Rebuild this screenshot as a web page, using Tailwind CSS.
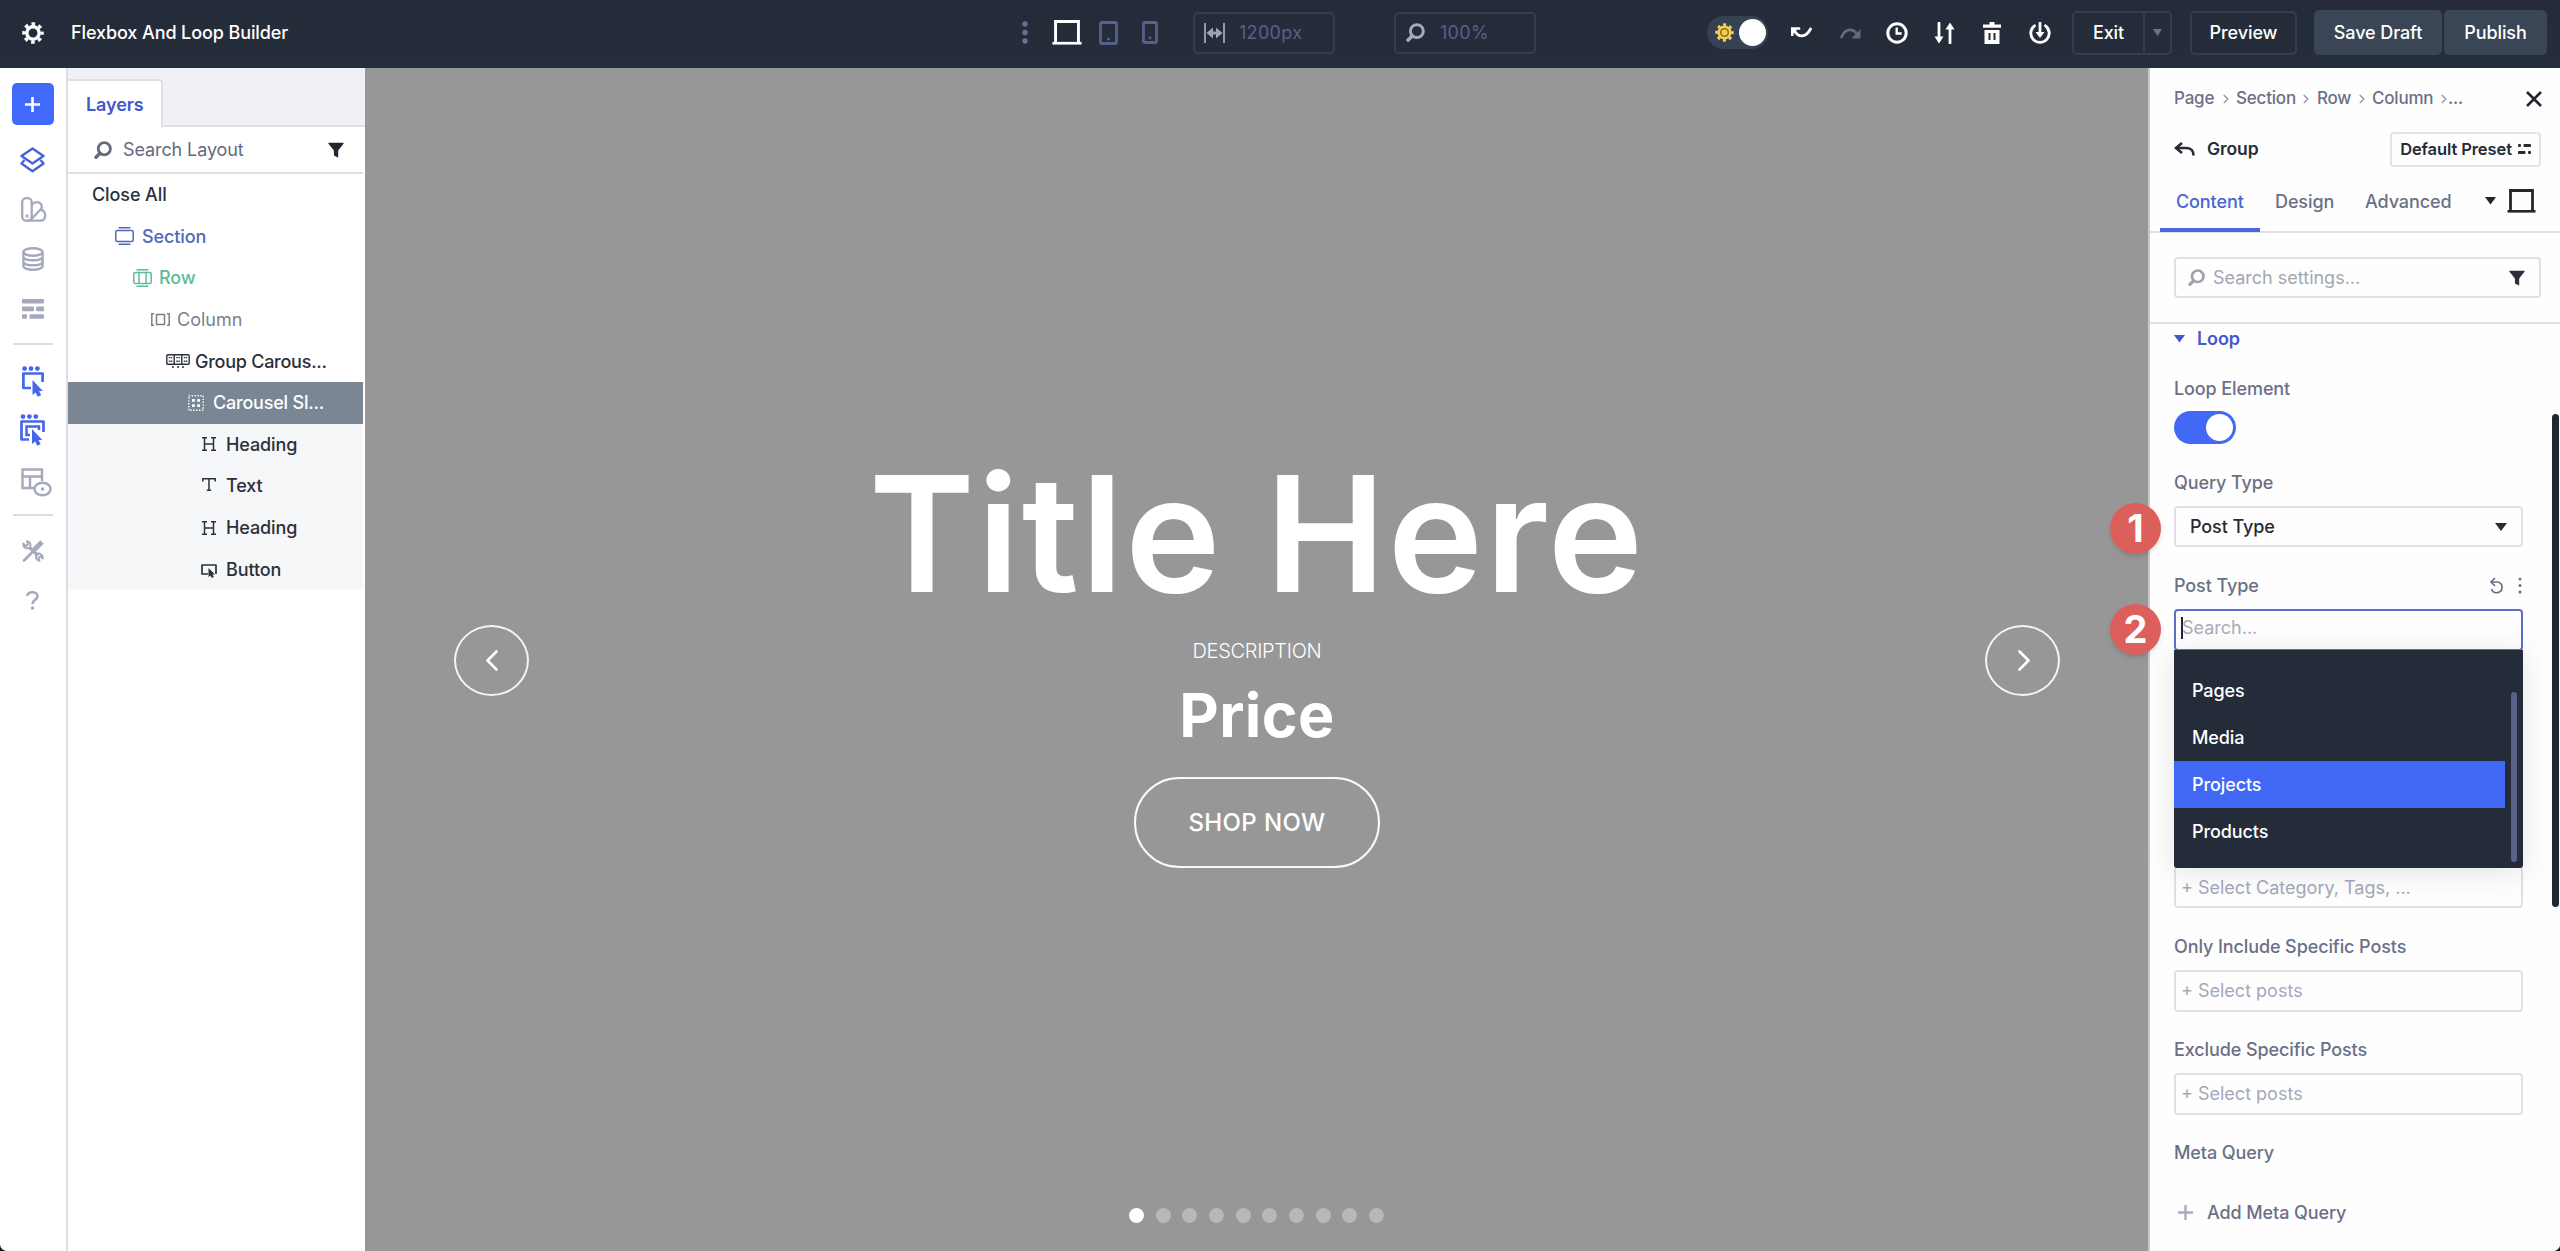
<!doctype html>
<html lang="en">
  <head>
    <meta charset="UTF-8" />
    <meta name="viewport" content="width=device-width, initial-scale=1.0" />
    <title>Flexbox And Loop Builder</title>
    <script src="https://cdn.jsdelivr.net/npm/@tailwindcss/browser@4"></script>
  </head>
  <body class="bg-[#111820] font-['Inter',sans-serif]">
    <svg class="hidden">
      <symbol id="i-search" viewBox="0 0 18 18">
        <circle cx="10.3" cy="7.7" r="6.1" fill="none" stroke="currentColor" stroke-width="2.8" />
        <path d="M6 12.2 2 16.2" stroke="currentColor" stroke-width="3.4" stroke-linecap="round" />
      </symbol>
      <symbol id="i-funnel" viewBox="0 0 16 16">
        <path d="M1 .7h14c.6 0 .8.6.5 1L10.2 8.5v6.3c0 .5-.4.7-.8.5l-3-1.6a.8.8 0 0 1-.5-.7V8.5L.5 1.7C.2 1.3.4.7 1 .7z" fill="currentColor" />
      </symbol>
      <symbol id="i-laptop" viewBox="0 0 28 24">
        <path d="M3 22V1.500h22V22" fill="none" stroke="currentColor" stroke-width="2.800" />
        <path d="M0 22.300h28" stroke="currentColor" stroke-width="2.600" />
      </symbol>
      <symbol id="i-heading" viewBox="0 0 16 14">
        <path d="M3.500 1v12M12.500 1v12M3.500 7h9M1 .8h5M10 .8h5M1 13.200h5M10 13.200h5" fill="none" stroke="currentColor" stroke-width="1.500" />
      </symbol>
      <symbol id="i-chevron" viewBox="0 0 6 10">
        <path d="m.8 1 4 4-4 4" fill="none" stroke="currentColor" stroke-width="1.600" />
      </symbol>
    </svg>

    <div class="flex h-[1251px] w-[2560px] flex-col overflow-hidden rounded-b-[7px] bg-white">
      <!-- top bar -->
      <header class="flex h-[68px] shrink-0 items-center bg-linear-to-b from-[#242a39] to-[#252e3a] pb-[3px] text-[18px] font-medium tracking-[-0.1px] text-white">
        <svg class="ml-[22px] size-[22px]" viewBox="0 0 22 22">
          <circle cx="11" cy="11" r="6.200" fill="none" stroke="currentColor" stroke-width="3.400" />
          <circle cx="11" cy="11" r="9.200" fill="none" stroke="currentColor" stroke-width="3.200" stroke-dasharray="3.613 3.613" stroke-dashoffset="1.800" />
        </svg>
        <div class="ml-[27px] w-[944px] whitespace-nowrap">Flexbox And Loop Builder</div>

        <div class="flex w-[692px] items-center text-[#59608a]">
          <svg class="ml-[7px] h-[24px] w-[6px] text-[#6a7090]" viewBox="0 0 6 24" fill="currentColor">
            <circle cx="3" cy="3" r="2.700" /><circle cx="3" cy="11.500" r="2.700" /><circle cx="3" cy="20" r="2.700" />
          </svg>
          <svg class="ml-[24px] h-[25px] w-[30px] text-white"><use href="#i-laptop" /></svg>
          <svg class="ml-[17px] h-[24px] w-[19px]" viewBox="0 0 19 24">
            <rect x="1.500" y="1.500" width="16" height="21" rx="1.500" fill="none" stroke="currentColor" stroke-width="2.800" />
            <circle cx="9.500" cy="18" r="1.500" fill="currentColor" />
          </svg>
          <svg class="ml-[24px] h-[23px] w-[16px]" viewBox="0 0 16 23">
            <rect x="1.500" y="1.500" width="13" height="20" rx="1.500" fill="none" stroke="currentColor" stroke-width="2.800" />
            <circle cx="8" cy="17" r="1.400" fill="currentColor" />
          </svg>
          <div class="ml-[35px] flex h-[42px] w-[142px] items-center rounded-[5px] border-2 border-[#363d4f] font-normal">
            <svg class="ml-[9px] h-[20px] w-[21px] text-[#9ea5b9]" viewBox="0 0 21 20">
              <path d="M1 0v20M20 0v20" stroke="currentColor" stroke-width="1.800" />
              <path d="M2.500 10 9 4.500V8.500h3V4.500L18.500 10 12 15.500V11.500H9v4z" fill="currentColor" />
            </svg>
            <span class="ml-[14px] tracking-[0.3px]">1200px</span>
          </div>
          <div class="ml-[59px] flex h-[42px] w-[142px] items-center rounded-[5px] border-2 border-[#363d4f] font-normal">
            <svg class="ml-[10px] size-[19px] text-[#a5abbe]"><use href="#i-search" /></svg>
            <span class="ml-[15px] tracking-[0.3px]">100%</span>
          </div>
        </div>

        <div class="flex items-center">
          <div class="flex h-[33px] w-[61px] items-center justify-between rounded-full bg-[#364151] pr-[2px] pl-[8px]">
            <svg class="size-[19px]" viewBox="0 0 20 20">
              <circle cx="10" cy="10" r="7.500" fill="#f2cf55" />
              <circle cx="10" cy="10" r="8" fill="none" stroke="#f2cf55" stroke-width="3.500" stroke-dasharray="3.140 3.140" stroke-dashoffset="1.570" />
              <circle cx="10" cy="10" r="4" fill="none" stroke="#8b6d1c" stroke-width="1.600" />
            </svg>
            <div class="size-[27px] rounded-full bg-white"></div>
          </div>
          <svg class="ml-[23px] h-[12px] w-[21px]" viewBox="0 0 21 12">
            <path d="M4 4.500c3 5.500 10.500 7 15.500-2.500" fill="none" stroke="currentColor" stroke-width="2.800" stroke-linecap="round" />
            <path d="M1.200 9V1.500h8" fill="none" stroke="currentColor" stroke-width="2.600" />
            <path d="M0 1h7.500L0 8.500z" fill="currentColor" />
          </svg>
          <svg class="ml-[28px] h-[12px] w-[21px] text-[#636978]" viewBox="0 0 21 12">
            <path d="M1.500 10C5.500 1 13 1 17 7" fill="none" stroke="currentColor" stroke-width="2.800" stroke-linecap="round" />
            <path d="M20.500 2v9.500h-9z" fill="currentColor" />
          </svg>
          <svg class="ml-[25px] size-[22px]" viewBox="0 0 22 22" fill="none" stroke="currentColor">
            <circle cx="11" cy="11" r="9.200" stroke-width="3" />
            <path d="M10.700 5.500v6h5" stroke-width="2.400" />
          </svg>
          <svg class="ml-[26px] h-[22px] w-[21px]" viewBox="0 0 21 22">
            <path d="M5 1v15M16 6v15" stroke="currentColor" stroke-width="2.800" stroke-linecap="round" />
            <path d="M.5 14.500h9L5 21.500zM11.500 7.500h9L16 .5z" fill="currentColor" />
          </svg>
          <svg class="ml-[28px] h-[22px] w-[18px]" viewBox="0 0 18 22">
            <path d="M6.500 0h5v2.500H18v3.200H0V2.500h6.500z" fill="currentColor" />
            <path fill-rule="evenodd" d="M1.500 8h15v14h-15zM5.500 11v7h2v-7zM10.500 11v7h2v-7z" fill="currentColor" />
          </svg>
          <svg class="ml-[28px] size-[22px]" viewBox="0 0 22 22" fill="none" stroke="currentColor">
            <path d="M5.500 3.800a9.200 9.200 0 1 0 11 0" stroke-width="2.900" stroke-linecap="round" />
            <path d="M11 1v11" stroke-width="2.800" stroke-linecap="round" />
            <path d="M6.500 10h9L11 16z" fill="currentColor" stroke="none" />
          </svg>
          <div class="ml-[21px] flex h-[44px] w-[100px] rounded-[5px] border-2 border-[#363d4f]">
            <div class="flex w-[69px] items-center justify-center">Exit</div>
            <div class="flex flex-1 items-center justify-center border-l-2 border-[#363d4f]">
              <svg class="h-[7px] w-[9px]" viewBox="0 0 9 7"><path d="M0 0h9L4.500 7z" fill="#6a6f98" /></svg>
            </div>
          </div>
          <div class="ml-[18px] flex h-[44px] w-[107px] items-center justify-center rounded-[5px] border-2 border-[#363d4f]">Preview</div>
          <div class="ml-[17px] flex h-[45px] w-[128px] items-center justify-center rounded-[5px] bg-[#3a4556]">Save Draft</div>
          <div class="ml-[2px] flex h-[45px] w-[103px] items-center justify-center rounded-[5px] bg-[#3a4556]">Publish</div>
        </div>
      </header>

      <div class="flex min-h-0 flex-1">
        <!-- icon rail -->
        <nav class="flex w-[68px] shrink-0 flex-col items-center border-r-2 border-[#dcdce3] pt-[15px] pr-px text-[#a5a9bb]">
          <div class="flex size-[42px] items-center justify-center rounded-[5px] bg-[#4169fa] text-white">
            <svg class="size-[15px]" viewBox="0 0 15 15"><path d="M7.500 0v15M0 7.500h15" stroke="currentColor" stroke-width="2.600" /></svg>
          </div>
          <div class="mt-[10px] flex h-[50px] items-center text-[#4762d8]">
            <svg class="h-[26px] w-[25px]" viewBox="0 0 25 26" fill="none" stroke="currentColor" stroke-width="2.400" stroke-linejoin="round">
              <path d="M12.500 1.500 23.500 9l-11 7.500L1.500 9z" />
              <path d="M4.500 13 1.500 16.500l11 7.700 11-7.700L20.500 13" />
            </svg>
          </div>
          <div class="flex h-[49px] items-center">
            <svg class="ml-[2px] h-[25px] w-[26px]" viewBox="0 0 26 25" fill="none" stroke="currentColor" stroke-width="2.300">
              <rect x="1.200" y="1.200" width="9.500" height="22.500" rx="4" />
              <path d="M11 7.500c5-5 11-1 9.500 4L10 22.500" />
              <path d="M19.500 13c6-.5 6.500 10.700 0 10.700H6" />
              <circle cx="6" cy="19" r=".6" />
            </svg>
          </div>
          <div class="flex h-[50px] items-center">
            <svg class="h-[24px] w-[22px]" viewBox="0 0 22 24" fill="none" stroke="currentColor" stroke-width="2.400">
              <ellipse cx="11" cy="5" rx="9.600" ry="3.800" />
              <path d="M1.400 5v14c0 2 4 3.800 9.600 3.800s9.600-1.800 9.600-3.800V5M1.400 9.800c0 2 4 3.500 9.600 3.500s9.600-1.500 9.600-3.500M1.400 14.800c0 2 4 3.500 9.600 3.500s9.600-1.500 9.600-3.500" />
            </svg>
          </div>
          <div class="flex h-[50px] items-center">
            <svg class="h-[20px] w-[22px]" viewBox="0 0 22 20" fill="currentColor">
              <rect width="22" height="4.600" rx="1" />
              <rect y="7.600" width="12" height="4.600" rx="1" /><rect x="14" y="7.600" width="8" height="4.600" rx="1" />
              <rect y="15.200" width="5" height="4.600" rx="1" /><rect x="7.500" y="15.200" width="14.500" height="4.600" rx="1" />
            </svg>
          </div>
          <div class="mt-[9px] h-[2px] w-[40px] bg-[#dedee2]"></div>
          <div class="mt-[11px] flex h-[50px] items-center text-[#4567ee]">
            <svg class="h-[31px] w-[22px]" viewBox="0 0 22 31">
              <g fill="currentColor"><circle cx="2.600" cy="2.600" r="2.400" /><circle cx="9" cy="2.600" r="2.400" /><circle cx="15.400" cy="2.600" r="2.400" /></g>
              <path d="M9 22H1.400V7.500h19.200V16" fill="none" stroke="currentColor" stroke-width="2.700" stroke-linejoin="round" />
              <path d="M10.500 14v15l3.200-2.600 2 4.300 3.400-1.500-2-4.200h3.700z" fill="currentColor" />
            </svg>
          </div>
          <div class="flex h-[47px] items-center text-[#4567ee]">
            <svg class="h-[32px] w-[25px]" viewBox="0 0 25 32">
              <g fill="currentColor"><circle cx="3" cy="2.600" r="2.400" /><circle cx="9.400" cy="2.600" r="2.400" /><circle cx="15.800" cy="2.600" r="2.400" /></g>
              <path d="M9 25.500H1.500V7.500h22V18" fill="none" stroke="currentColor" stroke-width="2.700" stroke-linejoin="round" />
              <path d="M10 21H6.500V12.500h12.500V16" fill="none" stroke="currentColor" stroke-width="2.500" />
              <path d="M12 15v15l3.200-2.600 2 4.300 3.400-1.500-2-4.200h3.700z" fill="currentColor" />
            </svg>
          </div>
          <div class="flex h-[58px] items-center">
            <svg class="ml-[8px] h-[29px] w-[31px]" viewBox="0 0 31 29" fill="none" stroke="currentColor" stroke-width="2.400">
              <path d="M13 20H1.500V1.500H21V13M1.500 8.500H21M9 8.500V20" />
              <ellipse cx="21.500" cy="21" rx="8" ry="6.300" />
              <circle cx="21.500" cy="21" r="1.800" fill="currentColor" stroke="none" />
            </svg>
          </div>
          <div class="mt-[3px] h-[2px] w-[40px] bg-[#dedee2]"></div>
          <div class="mt-[10px] flex h-[50px] items-center">
            <svg class="size-[22px]" viewBox="0 0 22 22" fill="none" stroke="currentColor">
              <path d="M7 7l9 8.500" stroke-width="3.200" />
              <path d="M1.300 3.500C1 8 5 9.500 8 7.500 9.500 4.500 8 1.500 5 1.300l1 3.200-2 1.500zM20.700 18.500C21 14 17 12.500 14.500 14.500c-1.500 3 0 6 3 6.200l-1-3.200 2-1.200z" stroke-width="1.900" stroke-linejoin="round" />
              <path d="M2 20.500 12.500 10" stroke-width="2.600" stroke-linecap="round" />
              <path d="M12.500 9.500 20 2" stroke-width="5" />
            </svg>
          </div>
          <div class="flex h-[48px] items-center">
            <svg class="h-[19px] w-[13px]" viewBox="0 0 13 19">
              <path d="M1.300 5C1.500 0 11.500 0 11.500 5.200 11.500 9 6.500 8.500 6.500 13" fill="none" stroke="currentColor" stroke-width="2.600" />
              <circle cx="6.500" cy="17" r="1.700" fill="currentColor" />
            </svg>
          </div>
        </nav>

        <!-- layers panel -->
        <aside class="flex w-[297px] shrink-0 flex-col text-[18px] font-medium tracking-[-0.1px] text-[#2b303a]">
          <div class="flex h-[59px] items-end border-b-2 border-[#dfdfe7] bg-[#f0f0f6]">
            <div class="-mb-[2px] flex h-[48px] w-[95px] items-center rounded-tr-[4px] border-t-2 border-r-2 border-[#dfdfe7] bg-white pl-[18px] font-semibold text-[#4358c8]">Layers</div>
          </div>
          <div class="flex h-[47px] w-[295px] items-center border-b-2 border-[#dfdfe4] text-[#646a80]">
            <svg class="ml-[26px] size-[18px]"><use href="#i-search" /></svg>
            <span class="ml-[11px] flex-1 font-normal">Search Layout</span>
            <svg class="mr-[19px] size-[16px] text-[#22262e]"><use href="#i-funnel" /></svg>
          </div>
          <div class="flex w-[295px] flex-col whitespace-nowrap">
            <div class="flex h-[41.6px] items-center pl-[24px]">Close All</div>
            <div class="flex h-[41.6px] items-center pl-[47px] text-[#5068bb]">
              <svg class="h-[18px] w-[19px]" viewBox="0 0 19 18" fill="none" stroke="currentColor" stroke-width="1.500">
                <rect x=".8" y="3.500" width="17.400" height="11" rx="1.500" /><path d="M3.500.8h12M3.500 17.200h12" />
              </svg>
              <span class="ml-[8px]">Section</span>
            </div>
            <div class="flex h-[41.6px] items-center pl-[65px] text-[#5dbb96]">
              <svg class="h-[18px] w-[19px]" viewBox="0 0 19 18" fill="none" stroke="currentColor" stroke-width="1.500">
                <rect x=".8" y="3.500" width="17.400" height="11" rx="1.500" /><path d="M3.500.8h12M3.500 17.200h12M6 3.500v11M13 3.500v11" />
              </svg>
              <span class="ml-[7px]">Row</span>
            </div>
            <div class="flex h-[41.6px] items-center pl-[83px] text-[#7c8089]">
              <svg class="h-[13px] w-[19px]" viewBox="0 0 19 13" fill="none" stroke="currentColor" stroke-width="1.500">
                <rect x="5.500" y="1.500" width="8" height="10" /><path d="M3 .8H.8v11.400H3M16 .8h2.200v11.400H16" />
              </svg>
              <span class="ml-[7px] font-normal tracking-normal">Column</span>
            </div>
            <div class="flex h-[41.6px] items-center pl-[98px]">
              <svg class="h-[14px] w-[24px]" viewBox="0 0 24 14" fill="none" stroke="currentColor" stroke-width="1.400">
                <rect x=".8" y=".8" width="22.400" height="9.500" rx="1" />
                <path d="M8.200.8v9.500M15.800.8v9.500" />
                <path d="M2.800 3.600h3.500M2.800 7.200h3.500M10.300 3.600h3.500M10.300 7.200h3.500M17.800 3.600h3.500M17.800 7.200h3.500" stroke-dasharray="1.500 .6" />
                <path d="M6 13h2M11 13h2M16 13h2" stroke-width="1.600" />
              </svg>
              <span class="ml-[5px] tracking-[-0.25px]">Group Carous...</span>
            </div>
            <div class="flex h-[41.6px] items-center bg-[#7b8695] pl-[120px] text-white">
              <svg class="size-[16px]" viewBox="0 0 16 16">
                <rect x=".8" y=".8" width="14.400" height="14.400" fill="none" stroke="currentColor" stroke-width="1.400" stroke-dasharray="1.400 1.480" />
                <path d="M4 4h2.800v2.800H4zM9.200 4H12v2.800H9.200zM4 9.200h2.800V12H4zM9.200 9.200H12V12H9.200z" fill="currentColor" />
              </svg>
              <span class="ml-[9px] tracking-[-0.2px]">Carousel Sl...</span>
            </div>
            <div class="flex h-[41.6px] items-center bg-[#f6f7f9] pl-[133px]">
              <svg class="h-[14px] w-[16px]"><use href="#i-heading" /></svg>
              <span class="ml-[9px]">Heading</span>
            </div>
            <div class="flex h-[41.6px] items-center bg-[#f6f7f9] pl-[134px]">
              <svg class="mb-[3px] h-[13px] w-[14px]" viewBox="0 0 14 13" fill="none" stroke="currentColor" stroke-width="1.500">
                <path d="M.8 3.500V.8h12.400v2.700M7 .8v11.500M4.800 12.200h4.400" />
              </svg>
              <span class="ml-[10px]">Text</span>
            </div>
            <div class="flex h-[41.6px] items-center bg-[#f6f7f9] pl-[133px]">
              <svg class="h-[14px] w-[16px]"><use href="#i-heading" /></svg>
              <span class="ml-[9px]">Heading</span>
            </div>
            <div class="flex h-[41.6px] items-center bg-[#f6f7f9] pl-[133px]">
              <svg class="mt-[3px] h-[14px] w-[16px]" viewBox="0 0 16 14">
                <path d="M7 10H1V1h14v9" fill="none" stroke="currentColor" stroke-width="1.700" stroke-linejoin="round" />
                <path d="M7.500 4v9l2-1.500 1.300 2.500 2-1-1.300-2.500H14z" fill="currentColor" />
              </svg>
              <span class="ml-[9px]">Button</span>
            </div>
          </div>
        </aside>

        <!-- canvas -->
        <main class="flex flex-1 flex-col items-center bg-[#979797] text-white">
          <div class="flex h-[1139px] w-full items-center justify-between pt-[46px] pr-[88px] pl-[89px]">
            <div class="flex h-[71px] w-[75px] items-center justify-center rounded-[50%] border-2 border-white/90">
              <svg class="h-[21px] w-[12px]" viewBox="0 0 12 21"><path d="M10.500 1.500 1.500 10.500l9 9" fill="none" stroke="currentColor" stroke-width="2.600" stroke-linecap="round" stroke-linejoin="round" /></svg>
            </div>
            <div class="flex flex-col items-center whitespace-nowrap">
              <h1 class="text-[161px] leading-[162px] font-semibold tracking-[2.2px]">Title Here</h1>
              <p class="mt-[24px] text-[20px] leading-[24px] font-light tracking-[-0.3px]">DESCRIPTION</p>
              <h2 class="mt-[10px] text-[61px] leading-[84px] font-bold tracking-[0.4px]">Price</h2>
              <div class="mt-[20px] flex h-[91px] w-[246px] items-center justify-center rounded-full border-2 border-white/95 text-[24px] font-medium tracking-[0.4px]">SHOP NOW</div>
            </div>
            <div class="flex h-[71px] w-[75px] items-center justify-center rounded-[50%] border-2 border-white/90">
              <svg class="ml-[3px] h-[21px] w-[12px]" viewBox="0 0 12 21"><path d="m1.500 1.500 9 9-9 9" fill="none" stroke="currentColor" stroke-width="2.600" stroke-linecap="round" stroke-linejoin="round" /></svg>
            </div>
          </div>
          <div class="mt-px flex gap-[11.7px]">
            <i class="size-[15px] rounded-full bg-white"></i>
            <i class="size-[15px] rounded-full bg-[#b8b8b8]"></i>
            <i class="size-[15px] rounded-full bg-[#b8b8b8]"></i>
            <i class="size-[15px] rounded-full bg-[#b8b8b8]"></i>
            <i class="size-[15px] rounded-full bg-[#b8b8b8]"></i>
            <i class="size-[15px] rounded-full bg-[#b8b8b8]"></i>
            <i class="size-[15px] rounded-full bg-[#b8b8b8]"></i>
            <i class="size-[15px] rounded-full bg-[#b8b8b8]"></i>
            <i class="size-[15px] rounded-full bg-[#b8b8b8]"></i>
            <i class="size-[15px] rounded-full bg-[#b8b8b8]"></i>
          </div>
        </main>

        <!-- settings panel -->
        <aside class="relative flex w-[412px] shrink-0 flex-col border-l-2 border-[#c9c9c9] bg-[#fefefe] text-[18px] font-medium tracking-[-0.1px] whitespace-nowrap text-[#6a7086]">
          <div class="flex h-[60px] items-center pt-[2px] pr-[18px] pl-[24px] text-[17px] tracking-[-0.2px]">
            <span class="w-[49px]">Page</span><svg class="mr-[7px] h-[10px] w-[6px] text-[#9a9eae]"><use href="#i-chevron" /></svg>
            <span class="w-[67px]">Section</span><svg class="mr-[8px] h-[10px] w-[6px] text-[#9a9eae]"><use href="#i-chevron" /></svg>
            <span class="w-[42px]">Row</span><svg class="mr-[7px] h-[10px] w-[6px] text-[#9a9eae]"><use href="#i-chevron" /></svg>
            <span class="w-[69px]">Column</span><svg class="mr-[1px] h-[10px] w-[6px] text-[#9a9eae]"><use href="#i-chevron" /></svg>
            <span class="flex-1">...</span>
            <svg class="size-[16px] text-[#22262e]" viewBox="0 0 16 16"><path d="m1 1 14 14M15 1 1 15" stroke="currentColor" stroke-width="2.600" /></svg>
          </div>
          <div class="flex h-[42px] items-center pr-[19px] pl-[24px] font-semibold text-[#262b34]">
            <svg class="h-[14px] w-[21px]" viewBox="0 0 21 14" fill="none" stroke="currentColor" stroke-width="2.600">
              <path d="M2.500 6H13c4 0 6.500 3 6.500 7.500" /><path d="M8 1 2 6l6 5" />
            </svg>
            <span class="ml-[12px] flex-1 text-[17.5px]">Group</span>
            <div class="flex h-[35px] w-[151px] items-center justify-center rounded-[4px] border-2 border-[#e2e2e7] text-[16.5px]">
              Default Preset
              <svg class="ml-[6px] h-[12px] w-[13px]" viewBox="0 0 13 12" fill="currentColor">
                <rect y="1" width="3" height="3" rx="1" /><rect x="5.500" y="1" width="7.500" height="3" rx="1" />
                <rect y="8" width="7.500" height="3" rx="1" /><rect x="10" y="8" width="3" height="3" rx="1" />
              </svg>
            </div>
          </div>
          <div class="flex h-[63px] items-stretch border-b-2 border-[#e0e0e4] pl-[10px]">
            <div class="-mb-[1px] flex w-[100px] items-center border-b-4 border-[#4a69dd] pt-[4px] pl-[16px] text-[#4a64d0]">Content</div>
            <div class="flex w-[90px] items-center pt-px pl-[15px]">Design</div>
            <div class="flex w-[121px] items-center pt-px pl-[15px]">Advanced</div>
            <div class="flex items-center text-[#22262e]">
              <svg class="ml-[14px] h-[8px] w-[11px]" viewBox="0 0 11 8"><path d="M0 0h11L5.500 7.500z" fill="currentColor" /></svg>
              <svg class="ml-[11px] h-[24px] w-[29px]"><use href="#i-laptop" /></svg>
            </div>
          </div>
          <div class="flex h-[91px] items-center border-b-2 border-[#e0e0e4] pl-[24px]">
            <div class="flex h-[41px] w-[367px] items-center rounded-[4px] border-2 border-[#e0e0e4] pr-[14px] pl-[12px]">
              <svg class="size-[17px] text-[#9ea2af]"><use href="#i-search" /></svg>
              <span class="ml-[8px] flex-1 font-normal tracking-normal text-[#a2a6b3]">Search settings...</span>
              <svg class="size-[16px] text-[#2b303a]"><use href="#i-funnel" /></svg>
            </div>
          </div>

          <div class="flex flex-col pl-[24px]">
            <div class="flex h-[29px] items-center font-semibold text-[#4259cc]">
              <svg class="h-[8px] w-[11px]" viewBox="0 0 11 8"><path d="M0 0h11L5.500 7.500z" fill="currentColor" /></svg>
              <span class="ml-[12px]">Loop</span>
            </div>
            <div class="mt-[23px] flex h-[24px] items-center">Loop Element</div>
            <div class="mt-[11px] flex h-[33px] w-[62px] items-center justify-end rounded-full bg-[#4169f5] pr-[3px]">
              <div class="size-[27px] rounded-full bg-white"></div>
            </div>
            <div class="mt-[26px] flex h-[24px] items-center">Query Type</div>
            <div class="mt-[12px] flex h-[41px] w-[349px] items-center justify-between rounded-[4px] border-2 border-[#e0e0e4] pr-[14px] pl-[14px] text-[#262b34]">
              <span>Post Type</span>
              <svg class="h-[8px] w-[12px]" viewBox="0 0 12 8"><path d="M0 0h12L6 8z" fill="currentColor" /></svg>
            </div>
            <div class="mt-[26px] flex h-[24px] w-[349px] items-center">
              <span class="flex-1">Post Type</span>
              <svg class="h-[17px] w-[15px]" viewBox="0 0 15 17" fill="none" stroke="currentColor" stroke-width="1.700">
                <path d="M2 5h6.500a5.400 5.400 0 1 1-6 7" /><path d="M6 1 2 5l4 4" />
              </svg>
              <svg class="mr-[1px] ml-[14px] h-[17px] w-[4px]" viewBox="0 0 4 17" fill="currentColor">
                <circle cx="2" cy="2" r="1.500" /><circle cx="2" cy="8.500" r="1.500" /><circle cx="2" cy="15" r="1.500" />
              </svg>
            </div>
            <div class="relative mt-[12px] flex h-[42px] w-[349px] items-center rounded-[4px] border-2 border-[#5a70c4] pb-[5px] pl-[5px] font-normal tracking-normal text-[#a9acba]">
              <i class="h-[22px] w-[2px] bg-[#22262e]"></i><span class="-ml-[1px]">Search...</span>
              <!-- post type options -->
              <div class="absolute top-[39px] -left-[2px] z-10 h-[218px] w-[349px] rounded-b-[3px] bg-[#252c39] pt-[17px] font-medium tracking-[-0.1px] text-white shadow-[0_4px_30px_rgba(40,45,60,0.12)]">
                <div class="flex h-[47px] items-center pl-[18px]">Pages</div>
                <div class="flex h-[47px] items-center pl-[18px]">Media</div>
                <div class="flex h-[47px] w-[331px] items-center bg-[#4169f5] pl-[18px]">Projects</div>
                <div class="flex h-[47px] items-center pl-[18px]">Products</div>
                <div class="absolute top-[42px] right-[6px] h-[170px] w-[6px] rounded-full bg-[#5b628a]"></div>
              </div>
            </div>
            <div class="mt-[215px] flex h-[42px] w-[349px] items-center rounded-[4px] border-2 border-[#e0e0e4] pl-[5px] font-normal tracking-normal text-[#a5a8ba]">+ Select Category, Tags, ...</div>
            <div class="mt-[26px] flex h-[24px] items-center">Only Include Specific Posts</div>
            <div class="mt-[12px] flex h-[42px] w-[349px] items-center rounded-[4px] border-2 border-[#e0e0e4] pb-px pl-[5px] font-normal tracking-normal text-[#a5a8ba]">+ Select posts</div>
            <div class="mt-[25px] flex h-[24px] items-center">Exclude Specific Posts</div>
            <div class="mt-[12px] flex h-[42px] w-[349px] items-center rounded-[4px] border-2 border-[#e0e0e4] pb-px pl-[5px] font-normal tracking-normal text-[#a5a8ba]">+ Select posts</div>
            <div class="mt-[25px] flex h-[24px] items-center">Meta Query</div>
            <div class="mt-[36px] flex h-[24px] items-center">
              <svg class="ml-[4px] size-[15px] text-[#a9acba]" viewBox="0 0 15 15"><path d="M7.500 0v15M0 7.500h15" stroke="currentColor" stroke-width="2.400" /></svg>
              <span class="ml-[14px]">Add Meta Query</span>
            </div>
          </div>

          <div class="absolute top-[346px] right-[1px] h-[493px] w-[7px] rounded-full bg-[#22282f]"></div>
          <!-- step badges -->
          <div class="absolute top-[435px] -left-[40px] flex size-[51px] items-center justify-center rounded-full bg-[#dd5f5c] text-[38px] font-bold text-white shadow-md">1</div>
          <div class="absolute top-[536px] -left-[40px] flex size-[51px] items-center justify-center rounded-full bg-[#dd5f5c] text-[38px] font-bold text-white shadow-md">2</div>
        </aside>
      </div>
    </div>
  </body>
</html>
